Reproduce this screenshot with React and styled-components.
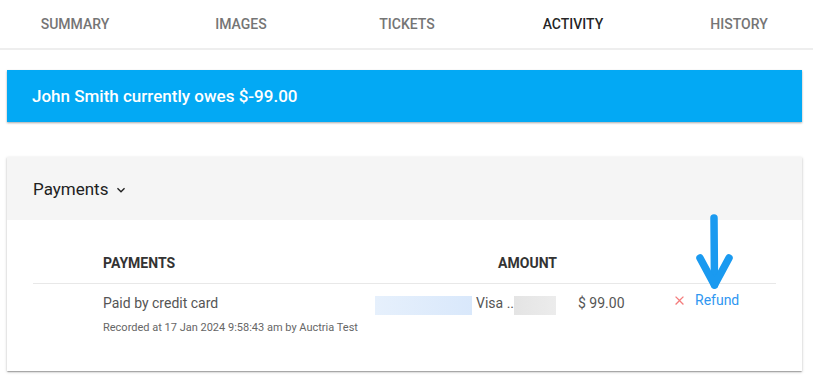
import styled, { createGlobalStyle } from "styled-components";

const GlobalStyle = createGlobalStyle`
  html, body {
    margin: 0;
    padding: 0;
    background: #ffffff;
    overflow: hidden;
  }
  body {
    font-family: Roboto, "Liberation Sans", Arial, sans-serif;
    -webkit-font-smoothing: antialiased;
  }
`;

const Page = styled.div`
  width: 813px;
  height: 380px;
  overflow: hidden;
`;

const TabBar = styled.nav`
  display: flex;
  height: 48px;
  border-bottom: 2px solid #eeeeee;
  overflow: hidden;
`;

const TabList = styled.div`
  display: flex;
  margin-left: -8px;
`;

const Tab = styled.div`
  flex: 0 0 166px;
  height: 50px;
  box-sizing: border-box;
  display: flex;
  align-items: center;
  justify-content: center;
  font-size: 14px;
  font-weight: 500;
  text-transform: uppercase;
  color: ${(p) => (p.$active ? "rgba(0, 0, 0, 0.87)" : "#757575")};
  border-bottom: 2px solid ${(p) => (p.$active ? "#2196f3" : "transparent")};
  margin-bottom: -2px;
`;

const Content = styled.main`
  padding: 20px 11px 0 7px;
`;

const Banner = styled.div`
  height: 52px;
  display: flex;
  align-items: center;
  padding-left: 25px;
  background: #03a9f4;
  color: #ffffff;
  font-size: 17px;
  font-weight: 500;
  box-shadow: 0 1px 2px rgba(0, 0, 0, 0.35);
  margin-bottom: 35px;
`;

const Card = styled.section`
  background: #ffffff;
  box-shadow: 0 1px 3px rgba(0, 0, 0, 0.2), 0 1px 1px rgba(0, 0, 0, 0.14),
    0 2px 1px -1px rgba(0, 0, 0, 0.12);
`;

const CardHeader = styled.header`
  height: 63px;
  display: flex;
  align-items: center;
  padding-left: 26px;
  background: #f5f5f5;
  color: #212121;
  font-size: 17px;
  gap: 5px;
`;

const Chevron = styled.svg`
  width: 16px;
  height: 16px;
  margin-top: 2px;
  fill: #212121;
`;

const CardBody = styled.div`
  padding: 36px 26px 0 26px;
`;

const Row = styled.div`
  display: grid;
  grid-template-columns: 70px 272px 195px 97px 1fr;
  align-items: start;
`;

const HeadRow = styled(Row)`
  padding-bottom: 12px;
  border-bottom: 1px solid #e8e8e8;
`;

const HeadCell = styled.div`
  grid-column: ${(p) => p.$col};
  font-size: 14px;
  line-height: 15px;
  font-weight: 700;
  color: #333333;
  text-transform: uppercase;
  text-align: ${(p) => p.$align || "left"};
  padding-right: ${(p) => (p.$align === "right" ? "13px" : "0")};
`;

const DataRow = styled(Row)`
  padding: 9px 0 36px;
  font-size: 14px;
  line-height: 20px;
  color: #555555;
`;

const Description = styled.div`
  grid-column: 2;
`;

const Recorded = styled.div`
  margin-top: 8px;
  font-size: 11px;
  line-height: 14px;
  color: #666666;
`;

const Method = styled.div`
  grid-column: 3;
  display: flex;
  align-items: flex-start;
`;

const Redacted = styled.span`
  display: block;
  width: ${(p) => p.$w}px;
  height: 19px;
  margin-top: 3px;
  background: ${(p) =>
    p.$tone === "blue"
      ? "linear-gradient(90deg, #e6f0fc, #d9e8fb)"
      : "linear-gradient(90deg, #e4e4e4, #ececec)"};
`;

const MethodText = styled.span`
  margin-left: 4px;
`;

const Amount = styled.div`
  grid-column: 4;
  padding-left: 8px;
`;

const Actions = styled.div`
  grid-column: 5;
  position: relative;
  padding-left: 8px;
  margin-top: -3px;
`;

const RefundButton = styled.button`
  display: inline-flex;
  align-items: center;
  gap: 8px;
  padding: 0;
  border: 0;
  background: none;
  font: inherit;
  font-size: 14px;
  line-height: 20px;
  color: #2f97f1;
  cursor: pointer;
`;

const CloseIcon = styled.svg`
  width: 15px;
  height: 15px;
  margin-left: -3px;
  fill: #f47c7c;
`;

const Pointer = styled.svg`
  position: absolute;
  left: 27px;
  top: -80px;
  width: 40px;
  height: 80px;
  pointer-events: none;
`;

const tabs = ["Summary", "Images", "Tickets", "Activity", "History"];

export default function App() {
  return (
    <Page>
      <GlobalStyle />
      <TabBar>
        <TabList>
          {tabs.map((t) => (
            <Tab key={t} $active={t === "Activity"}>
              {t}
            </Tab>
          ))}
        </TabList>
      </TabBar>
      <Content>
        <Banner>John Smith currently owes $-99.00</Banner>
        <Card>
          <CardHeader>
            Payments
            <Chevron viewBox="0 0 24 24">
              <path d="M16.59 8.59L12 13.17 7.41 8.59 6 10l6 6 6-6z" />
            </Chevron>
          </CardHeader>
          <CardBody>
            <HeadRow>
              <HeadCell $col={2}>Payments</HeadCell>
              <HeadCell $col={3} $align="right">
                Amount
              </HeadCell>
            </HeadRow>
            <DataRow>
              <Description>
                Paid by credit card
                <Recorded>Recorded at 17 Jan 2024 9:58:43 am by Auctria Test</Recorded>
              </Description>
              <Method>
                <Redacted $w={97} $tone="blue" />
                <MethodText>Visa ..</MethodText>
                <Redacted $w={42} $tone="grey" />
              </Method>
              <Amount>$ 99.00</Amount>
              <Actions>
                <Pointer viewBox="0 0 40 80">
                  <g
                    fill="none"
                    stroke="#1a9af0"
                    strokeWidth="7.5"
                    strokeLinecap="round"
                    strokeLinejoin="round"
                  >
                    <path d="M20 8 L20.5 75" />
                    <path d="M6 48 L20.5 75 L35 48" />
                  </g>
                </Pointer>
                <RefundButton>
                  <CloseIcon viewBox="0 0 24 24">
                    <path d="M19 6.41L17.59 5 12 10.59 6.41 5 5 6.41 10.59 12 5 17.59 6.41 19 12 13.41 17.59 19 19 17.59 13.41 12z" />
                  </CloseIcon>
                  Refund
                </RefundButton>
              </Actions>
            </DataRow>
          </CardBody>
        </Card>
      </Content>
    </Page>
  );
}
